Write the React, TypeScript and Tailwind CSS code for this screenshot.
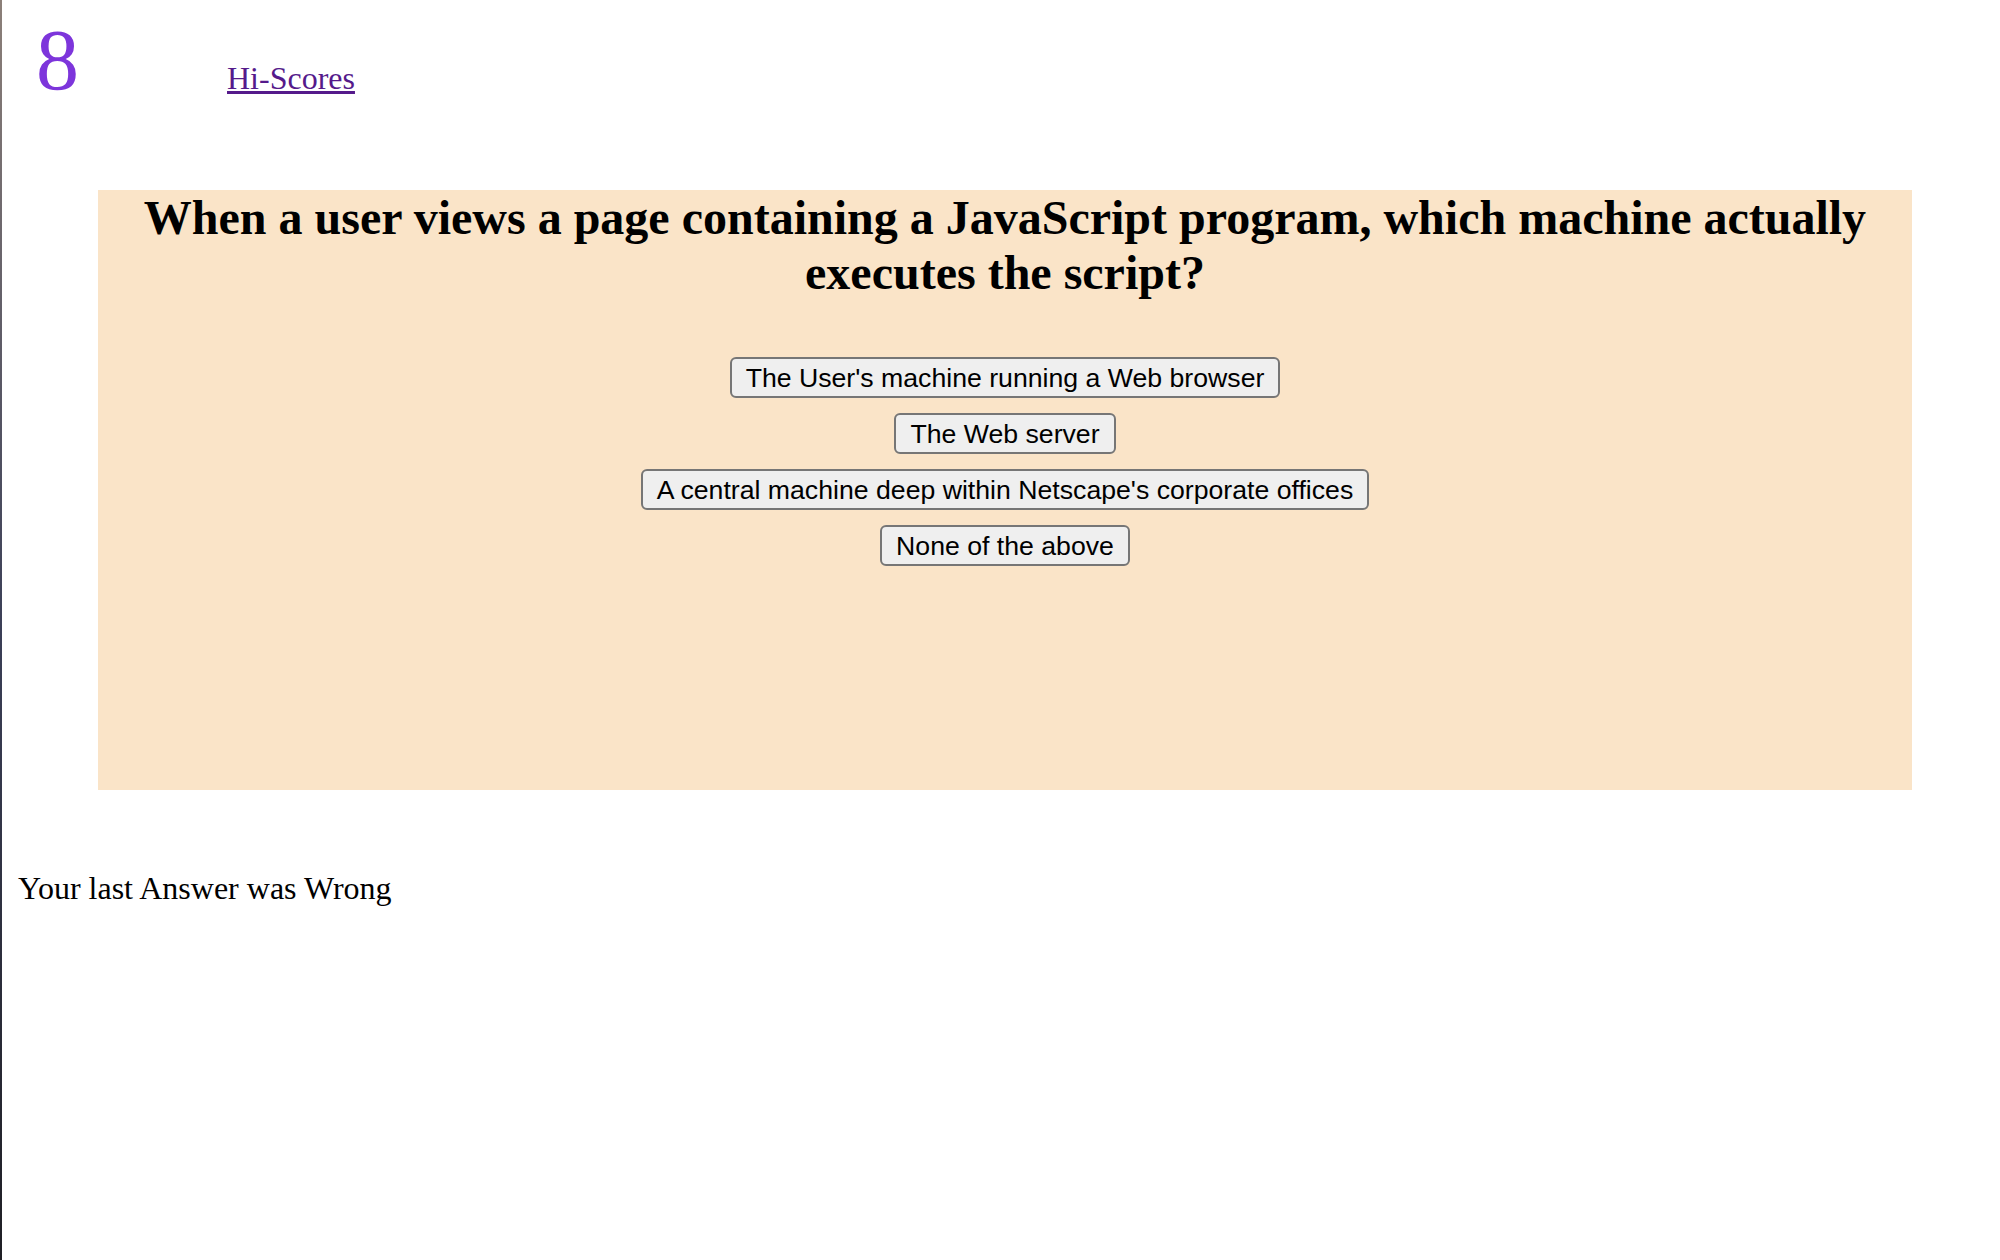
import React from "react";

const answers = [
  "The User's machine running a Web browser",
  "The Web server",
  "A central machine deep within Netscape's corporate offices",
  "None of the above",
];

export default function App() {
  return (
    <div className="flex min-h-[1260px] bg-white">
      <div className="w-[2px] shrink-0 bg-gradient-to-b from-[#8c8079] via-[#3b3f57] to-[#1f1f25]" />
      <div className="flex-1 font-['Liberation_Serif',serif] text-black">
        <div className="flex items-baseline pl-[34px] pt-[17px]">
          <span className="text-[86px] leading-none text-[#7d35db]">8</span>
          <a href="#" className="ml-[148px] text-[32px] leading-none text-[#551a8b] underline">
            Hi-Scores
          </a>
        </div>
        <div className="mt-[87px] ml-[96px] w-[1814px] h-[600px] bg-[#fae4c8] flex flex-col items-center">
          <h2 className="text-[48px] font-bold leading-[55px] text-center px-[30px]">
            When a user views a page containing a JavaScript program, which machine actually executes the script?
          </h2>
          <div className="mt-[57px] flex flex-col items-center gap-[15px]">
            {answers.map((a) => (
              <button
                key={a}
                className="h-[41px] px-[14px] flex items-center bg-[#efefef] border-2 border-[#767676] rounded-[6px] font-['Liberation_Sans',Arial,sans-serif] text-[26.67px] leading-normal text-black"
              >
                {a}
              </button>
            ))}
          </div>
        </div>
        <p className="mt-[74px] pl-[16px] text-[32px] leading-normal">Your last Answer was Wrong</p>
      </div>
    </div>
  );
}
